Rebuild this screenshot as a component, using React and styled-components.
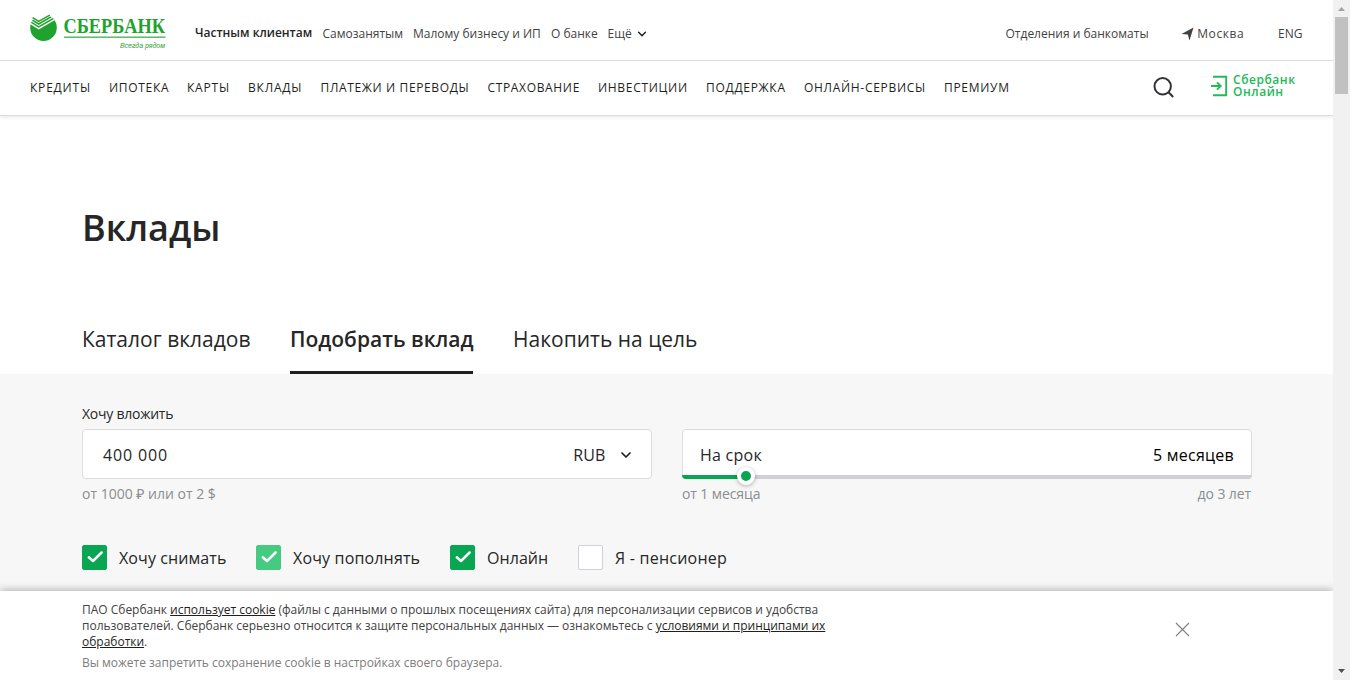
import React from "react";
import styled, { createGlobalStyle } from "styled-components";

const GlobalStyle = createGlobalStyle`
  *, *::before, *::after { box-sizing: border-box; }
  body {
    margin: 0;
    background: #fff;
    color: #262626;
    font-family: "Open Sans", "Noto Sans", sans-serif;
    overflow: hidden;
  }
`;

const Window = styled.div`
  display: flex;
  width: 1350px;
  height: 680px;
  overflow: hidden;
`;

const Page = styled.div`
  position: relative;
  flex: 1;
  min-width: 0;
  display: flex;
  flex-direction: column;
  overflow: hidden;
`;

const Header = styled.header`
  position: relative;
  flex: none;
  border-bottom: 1px solid #dcdcdc;
  box-shadow: 0 1px 4px rgba(0, 0, 0, 0.1);
`;

const TopBar = styled.div`
  display: flex;
  height: 61px;
  padding: 0 30px;
  border-bottom: 1px solid #dadcdb;
`;

const Logo = styled.svg`
  display: block;
  flex: none;
  width: 138px;
  height: 40px;
  margin-top: 12px;
  overflow: visible;
`;

const Segments = styled.nav`
  display: flex;
  flex: 1;
  padding-left: 27px;
  padding-top: 25px;
`;

const SmallLink = styled.a`
  display: flex;
  align-items: center;
  flex: none;
  height: 18px;
  width: ${(p) => p.$width}px;
  font-size: 12px;
  line-height: 18px;
  letter-spacing: ${(p) => p.$spacing || 0}px;
  font-weight: ${(p) => (p.$active ? 600 : 400)};
  color: ${(p) => (p.$active ? "#262626" : "#424242")};
  margin-top: ${(p) => (p.$active ? -1 : 0)}px;
  white-space: nowrap;
`;

const Utilities = styled.div`
  display: flex;
  flex: none;
  padding-top: 25px;
`;

const MainNav = styled.nav`
  display: flex;
  align-items: center;
  height: 54px;
  padding-left: 30px;
`;

const NavLink = styled.a`
  flex: none;
  width: ${(p) => p.$width}px;
  font-size: 12px;
  line-height: 18px;
  letter-spacing: ${(p) => p.$spacing || 0.7}px;
  color: #1f1f22;
  white-space: nowrap;
`;

const SearchIcon = styled.svg`
  flex: none;
  width: 22px;
  height: 22px;
  margin-left: 142.5px;
`;

const OnlineLink = styled.a`
  display: flex;
  gap: 4px;
  margin-left: 36.5px;
  margin-top: -4px;
  color: #21ba56;
  font-size: 12px;
  font-weight: 600;
  line-height: 12px;
  letter-spacing: 0.55px;
`;

const Hero = styled.section`
  flex: none;
  height: 258px;
  padding: 84px 0 0 82px;
`;

const Title = styled.h1`
  margin: 0;
  height: 56px;
  font-size: 36px;
  line-height: 56px;
  font-weight: 600;
  color: #262626;
`;

const Tabs = styled.div`
  display: flex;
  gap: 40px;
  height: 63px;
  margin-top: 55px;
`;

const Tab = styled.a`
  flex: none;
  width: ${(p) => p.$width}px;
  height: 63px;
  padding-top: 12px;
  font-size: 21px;
  line-height: 32px;
  letter-spacing: ${(p) => p.$spacing || 0}px;
  font-weight: ${(p) => (p.$active ? 600 : 400)};
  color: #262626;
  border-bottom: 3px solid ${(p) => (p.$active ? "#1f1f22" : "transparent")};
  white-space: nowrap;
`;

const Form = styled.section`
  flex: 1;
  padding: 30px 81px 0 82px;
  background: #f7f7f7;
`;

const Columns = styled.div`
  display: flex;
  gap: 30px;
`;

const Field = styled.div`
  width: 570px;
`;

const Label = styled.div`
  height: 25px;
  font-size: 14px;
  line-height: 20px;
  letter-spacing: -0.25px;
  color: #262626;
`;

const InputBox = styled.div`
  position: relative;
  display: flex;
  align-items: center;
  height: 50px;
  padding: 1px ${(p) => p.$right}px 0 ${(p) => p.$left}px;
  border: 1px solid #dcdcde;
  border-radius: 4px;
  background: #fff;
  font-size: 16px;
`;

const Value = styled.span`
  color: ${(p) => p.$color || "#262626"};
  letter-spacing: ${(p) => p.$spacing || 0}px;
  margin-left: ${(p) => (p.$end ? "auto" : 0)};
  white-space: nowrap;
`;

const Chevron = styled.svg`
  flex: none;
  width: ${(p) => p.$size}px;
  height: ${(p) => p.$size}px;
  margin-left: ${(p) => p.$gap}px;
`;

const Track = styled.div`
  position: absolute;
  left: -1px;
  right: -1px;
  bottom: -1px;
  height: 4px;
  border-radius: 0 0 4px 4px;
  background: linear-gradient(to right, #08a652 ${(p) => p.$filled}px, #d0d1d8 ${(p) => p.$filled}px);
`;

const Handle = styled.div`
  position: absolute;
  left: ${(p) => p.$filled - 10}px;
  top: 37px;
  width: 18px;
  height: 18px;
  border: 4px solid #fff;
  border-radius: 50%;
  background: #08a652;
  box-shadow: 0 1px 4px rgba(0, 0, 0, 0.3);
`;

const Hints = styled.div`
  display: flex;
  justify-content: space-between;
  padding: 5px 1px 0 0;
  font-size: 14px;
  line-height: 20px;
  letter-spacing: ${(p) => p.$spacing || 0}px;
  color: #8b8d90;
`;

const Options = styled.div`
  display: flex;
  margin-top: 41px;
`;

const Option = styled.label`
  display: flex;
  align-items: center;
  gap: 12px;
  width: ${(p) => p.$width}px;
  height: 25px;
  font-size: 16px;
  letter-spacing: ${(p) => p.$spacing || 0}px;
  white-space: nowrap;
`;

const Box = styled.span`
  display: flex;
  flex: none;
  width: 25px;
  height: 25px;
  border-radius: 2px;
  border: 1px solid ${(p) => p.$color || "#d0d1d8"};
  background: ${(p) => p.$color || "#fff"};
`;

const CookieBar = styled.aside`
  position: absolute;
  left: 0;
  right: 0;
  bottom: 0;
  display: flex;
  justify-content: space-between;
  height: 89px;
  padding: 11px 143px 0 82px;
  background: #fff;
  box-shadow: 0 -1px 8px rgba(0, 0, 0, 0.3);
`;

const CookieText = styled.div`
  font-size: 12px;
  line-height: 16px;
  color: #424242;
`;

const Line = styled.div`
  height: 16px;
  letter-spacing: -0.015px;
  white-space: nowrap;
`;

const Note = styled(Line)`
  margin-top: 5px;
  color: #7d7d7d;
`;

const TextLink = styled.a`
  color: #1f1f22;
  text-decoration: underline;
`;

const CloseIcon = styled.svg`
  width: 15px;
  height: 15px;
  margin-top: 20px;
`;

const ScrollBar = styled.div`
  display: flex;
  flex-direction: column;
  align-items: center;
  flex: none;
  width: 17px;
  background: #f1f1f1;
`;

const ScrollArrow = styled.svg`
  flex: none;
  width: 17px;
  height: 17px;
`;

const Thumb = styled.div`
  width: 13px;
  height: 77px;
  background: #c1c1c1;
  margin-bottom: auto;
`;

const segments = [
  { text: "Частным клиентам", width: 127.5, active: true },
  { text: "Самозанятым", width: 90.5 },
  { text: "Малому бизнесу и ИП", width: 138 },
  { text: "О банке", width: 56.5 },
];

const sections = [
  ["КРЕДИТЫ", 79, 0.8],
  ["ИПОТЕКА", 78],
  ["КАРТЫ", 61, 0.8],
  ["ВКЛАДЫ", 72.5, 0.8],
  ["ПЛАТЕЖИ И ПЕРЕВОДЫ", 167, 0.64],
  ["СТРАХОВАНИЕ", 110.5, 0.66],
  ["ИНВЕСТИЦИИ", 108],
  ["ПОДДЕРЖКА", 98],
  ["ОНЛАЙН-СЕРВИСЫ", 140],
  ["ПРЕМИУМ", 66],
];

const options = [
  { text: "Хочу снимать", width: 174, spacing: 0.1, color: "#08a652" },
  { text: "Хочу пополнять", width: 194, spacing: 0.16, color: "#46c980" },
  { text: "Онлайн", width: 128, spacing: 0.05, color: "#08a652" },
  { text: "Я - пенсионер", width: 160, spacing: 0.24 },
];

function SberLogo() {
  return (
    <Logo viewBox="0 0 138 40">
      <defs>
        <clipPath id="disc">
          <circle cx="13.5" cy="15.7" r="13.3" />
        </clipPath>
      </defs>
      <g clipPath="url(#disc)">
        <path d="M-1 11.5L8.7 17.4L28 6.2V30H-1Z" fill="#1fa22e" />
        <path d="M-1 8.8L8.7 14.9L28 3.7M-1 5.9L8.7 12L28 0.8" fill="none" stroke="#1fa22e" strokeWidth="1.5" />
      </g>
      <path d="M2.6 5.6L8.7 9.3L19.8 3.2" fill="none" stroke="#1fa22e" strokeWidth="1.5" />
      <text x="33.5" y="21" fontFamily="'Liberation Serif', serif" fontWeight="700" fontSize="21" textLength="101.5" lengthAdjust="spacingAndGlyphs" fill="#1fa22e">СБЕРБАНК</text>
      <rect x="34" y="24.6" width="101.5" height="1.1" fill="#1fa22e" />
      <text x="90" y="35.5" fontFamily="'Liberation Sans', sans-serif" fontStyle="italic" fontSize="7" textLength="45" lengthAdjust="spacingAndGlyphs" fill="#1fa22e">Всегда рядом</text>
    </Logo>
  );
}

function ChevronDown({ size, gap, stroke }) {
  return (
    <Chevron $size={size} $gap={gap} viewBox="0 0 12 12">
      <path d="M2 4L6 8L10 4" fill="none" stroke="#1f1f22" strokeWidth={stroke} strokeLinecap="round" strokeLinejoin="round" />
    </Chevron>
  );
}

export default function App() {
  return (
    <Window>
      <GlobalStyle />
      <Page>
        <Header>
          <TopBar>
            <SberLogo />
            <Segments>
              {segments.map((s) => (
                <SmallLink key={s.text} $width={s.width} $active={s.active}>{s.text}</SmallLink>
              ))}
              <SmallLink $width={40}>
                Ещё
                <ChevronDown size={10} gap={5.5} stroke={1.8} />
              </SmallLink>
            </Segments>
            <Utilities>
              <SmallLink $width={175}>Отделения и банкоматы</SmallLink>
              <SmallLink $width={97.5} $spacing={0.6}>
                <svg width="13" height="14" viewBox="0 0 13 14">
                  <path d="M12.5 0.5L8.5 13.5L6.8 7.6L0.5 7Z" fill="#424242" />
                </svg>
                <span>&nbsp;Москва</span>
              </SmallLink>
              <SmallLink $width={25}>ENG</SmallLink>
            </Utilities>
          </TopBar>
          <MainNav>
            {sections.map(([text, width, spacing]) => (
              <NavLink key={text} $width={width} $spacing={spacing}>{text}</NavLink>
            ))}
            <SearchIcon viewBox="0 0 22 22">
              <circle cx="9.7" cy="9.3" r="8.2" fill="none" stroke="#333337" strokeWidth="2" />
              <path d="M15.5 15.3L20.2 20" stroke="#333337" strokeWidth="2" />
            </SearchIcon>
            <OnlineLink>
              <svg width="18" height="24" viewBox="0 0 18 24">
                <path d="M2 2.8H15.2V21.2H2M0 12H9.5M6 8.3L9.7 12L6 15.7" fill="none" stroke="#21ba56" strokeWidth="1.9" />
              </svg>
              <span>Сбербанк<br />Онлайн</span>
            </OnlineLink>
          </MainNav>
        </Header>

        <Hero>
          <Title>Вклады</Title>
          <Tabs>
            <Tab $width={168}>Каталог вкладов</Tab>
            <Tab $width={183} $active>Подобрать вклад</Tab>
            <Tab $width={184}>Накопить на цель</Tab>
          </Tabs>
        </Hero>

        <Form>
          <Columns>
            <Field>
              <Label>Хочу вложить</Label>
              <InputBox $left={20} $right={19}>
                <Value $spacing={0.85}>400 000</Value>
                <Value $end $spacing={0.1}>RUB</Value>
                <ChevronDown size={12} gap={14.5} stroke={1.7} />
              </InputBox>
              <Hints><span>от 1000 ₽ или от 2 $</span></Hints>
            </Field>
            <Field>
              <Label />
              <InputBox $left={17} $right={17}>
                <Value $spacing={0.25}>На срок</Value>
                <Value $end $color="#000" $spacing={0.25}>5 месяцев</Value>
                <Track $filled={64} />
                <Handle $filled={64} />
              </InputBox>
              <Hints $spacing={-0.1}><span>от 1 месяца</span><span>до 3 лет</span></Hints>
            </Field>
          </Columns>
          <Options>
            {options.map((o) => (
              <Option key={o.text} $width={o.width} $spacing={o.spacing}>
                <Box $color={o.color}>
                  {o.color && (
                    <svg width="23" height="23" viewBox="0 0 23 23">
                      <path d="M5.8 11.3L10 15L18.6 6.5" fill="none" stroke="#fff" strokeWidth="2.5" strokeLinecap="round" strokeLinejoin="round" />
                    </svg>
                  )}
                </Box>
                <span>{o.text}</span>
              </Option>
            ))}
          </Options>
        </Form>

        <CookieBar>
          <CookieText>
            <Line>ПАО Сбербанк <TextLink>использует cookie</TextLink> (файлы с данными о прошлых посещениях сайта) для персонализации сервисов и удобства</Line>
            <Line>пользователей. Сбербанк серьезно относится к защите персональных данных — ознакомьтесь с <TextLink>условиями и принципами их</TextLink></Line>
            <Line><TextLink>обработки</TextLink>.</Line>
            <Note>Вы можете запретить сохранение cookie в настройках своего браузера.</Note>
          </CookieText>
          <CloseIcon viewBox="0 0 15 15">
            <path d="M1 1L14 14M14 1L1 14" stroke="#808080" strokeWidth="1.1" />
          </CloseIcon>
        </CookieBar>
      </Page>
      <ScrollBar>
        <ScrollArrow viewBox="0 0 17 17">
          <path d="M5 11L8.5 7L12 11Z" fill="#a3a3a3" />
        </ScrollArrow>
        <Thumb />
        <ScrollArrow viewBox="0 0 17 17">
          <path d="M5 6L8.5 10L12 6Z" fill="#505050" />
        </ScrollArrow>
      </ScrollBar>
    </Window>
  );
}
